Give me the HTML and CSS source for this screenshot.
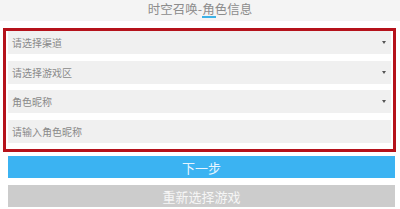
FILE: index.html
```html
<!DOCTYPE html>
<html lang="zh-CN">
<head>
    <meta charset="UTF-8">
    <meta name="viewport" content="width=device-width, initial-scale=1.0">
    <title>时空召唤-角色信息</title>
    <link rel="stylesheet" href="styles.css">
</head>
<body>
    <div class="header">
        <h1 class="title">时空召唤-<span class="title-mark">角</span>色信息</h1>
    </div>

    <div class="role-form">
        <div class="field select">
            <span>请选择渠道</span>
            <i class="caret"></i>
        </div>
        <div class="field select">
            <span>请选择游戏区</span>
            <i class="caret"></i>
        </div>
        <div class="field select">
            <span>角色昵称</span>
            <i class="caret"></i>
        </div>
        <div class="field">
            <span>请输入角色昵称</span>
        </div>
    </div>

    <button class="btn btn-next">下一步</button>
    <button class="btn btn-reset">重新选择游戏</button>
</body>
</html>
```

FILE: styles.css
```css
body {
    margin: 0;
    font-family: "Noto Sans CJK SC", "Noto Sans", sans-serif;
    background: #fff;
    width: 400px;
    overflow: hidden;
}

.header {
    height: 21px;
    background: #f4f4f4;
    text-align: center;
}

.title {
    margin: 0;
    font-size: 12.5px;
    font-weight: normal;
    line-height: 18px;
    color: #8c8c8c;
}

.title-mark {
    position: relative;
}

.title-mark::after {
    content: "";
    position: absolute;
    left: 0;
    right: -1px;
    top: 17px;
    height: 1.5px;
    background: #3cb2e6;
}

.role-form {
    margin: 7px 4px 0 3px;
    border: 3px solid #b5121b;
    padding: 0 2px 6.5px 2px;
}

.field {
    height: 23px;
    margin-bottom: 6.5px;
    background: #f0f0f0;
    display: flex;
    align-items: center;
    justify-content: space-between;
    padding: 0 4px;
    font-size: 10px;
    color: #8a8a8a;
}

.field:last-child {
    margin-bottom: 0;
}

.caret {
    width: 0;
    height: 0;
    border-left: 2.5px solid transparent;
    border-right: 2.5px solid transparent;
    border-top: 3px solid #555;
    margin-right: 1px;
}

.btn {
    display: block;
    width: 387px;
    height: 22px;
    margin: 4px 5px 0 8px;
    border: none;
    padding: 0;
    font-family: inherit;
    font-size: 13px;
    color: #fff;
}

.btn-next {
    background: #3bb3f2;
    color: #e6f5ff;
}

.btn-reset {
    margin-top: 7px;
    background: #cccccc;
    color: #f6f6f6;
}
```
